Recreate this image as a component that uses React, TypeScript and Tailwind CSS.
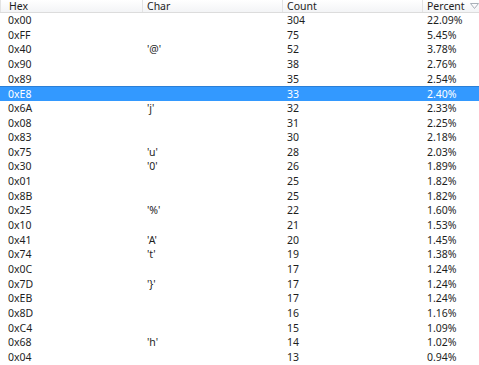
import React from 'react';

type Row = { hex: string; ch: string; count: number; pct: string };

const ROWS: Row[] = [
  { hex: '0x00', ch: '', count: 304, pct: '22.09%' },
  { hex: '0xFF', ch: '', count: 75, pct: '5.45%' },
  { hex: '0x40', ch: "'@'", count: 52, pct: '3.78%' },
  { hex: '0x90', ch: '', count: 38, pct: '2.76%' },
  { hex: '0x89', ch: '', count: 35, pct: '2.54%' },
  { hex: '0xE8', ch: '', count: 33, pct: '2.40%' },
  { hex: '0x6A', ch: "'j'", count: 32, pct: '2.33%' },
  { hex: '0x08', ch: '', count: 31, pct: '2.25%' },
  { hex: '0x83', ch: '', count: 30, pct: '2.18%' },
  { hex: '0x75', ch: "'u'", count: 28, pct: '2.03%' },
  { hex: '0x30', ch: "'0'", count: 26, pct: '1.89%' },
  { hex: '0x01', ch: '', count: 25, pct: '1.82%' },
  { hex: '0x8B', ch: '', count: 25, pct: '1.82%' },
  { hex: '0x25', ch: "'%'", count: 22, pct: '1.60%' },
  { hex: '0x10', ch: '', count: 21, pct: '1.53%' },
  { hex: '0x41', ch: "'A'", count: 20, pct: '1.45%' },
  { hex: '0x74', ch: "'t'", count: 19, pct: '1.38%' },
  { hex: '0x0C', ch: '', count: 17, pct: '1.24%' },
  { hex: '0x7D', ch: "'}'", count: 17, pct: '1.24%' },
  { hex: '0xEB', ch: '', count: 17, pct: '1.24%' },
  { hex: '0x8D', ch: '', count: 16, pct: '1.16%' },
  { hex: '0xC4', ch: '', count: 15, pct: '1.09%' },
  { hex: '0x68', ch: "'h'", count: 14, pct: '1.02%' },
  { hex: '0x04', ch: '', count: 13, pct: '0.94%' },
];

const SELECTED = 5;

export default function App() {
  return (
    <div className="w-[479px] h-[365px] overflow-hidden bg-white text-[10.5px] text-[#1e1e1e] font-['Noto_Sans',sans-serif] leading-none">
      {/* Header */}
      <div className="flex h-[13px] border-b border-[#dcdcdc] bg-gradient-to-b from-white to-[#f3f4f6]">
        <div className="w-[143px] flex items-center pl-[8px] border-l border-r border-[#e3e3e3]">Hex</div>
        <div className="w-[140px] flex items-center pl-[4px] border-r border-[#e3e3e3]">Char</div>
        <div className="w-[140px] flex items-center pl-[4px] border-r border-[#e3e3e3]">Count</div>
        <div className="flex-1 flex items-center pl-[4px]">
          Percent
          <svg width="9" height="6" viewBox="0 0 9 6" className="ml-[5px]">
            <path d="M0.5 0.5 H8.5 L4.5 5.5 Z" fill="none" stroke="#a9b0b8" strokeWidth="1" />
          </svg>
        </div>
      </div>
      {/* Rows */}
      <div className="flex flex-col">
        {ROWS.map((r, i) => (
          <div
            key={r.hex}
            className={
              i === SELECTED
                ? 'flex items-center h-[14.65px] bg-[#3399ff] text-white border-t border-[#2b7fd6]'
                : 'flex items-center h-[14.65px]'
            }
          >
            <div className="w-[143px] pl-[8px]">{r.hex}</div>
            <div className="w-[140px] pl-[4px]">{r.ch}</div>
            <div className="w-[140px] pl-[4px]">{r.count}</div>
            <div className="flex-1 pl-[4px]">{r.pct}</div>
          </div>
        ))}
      </div>
    </div>
  );
}
